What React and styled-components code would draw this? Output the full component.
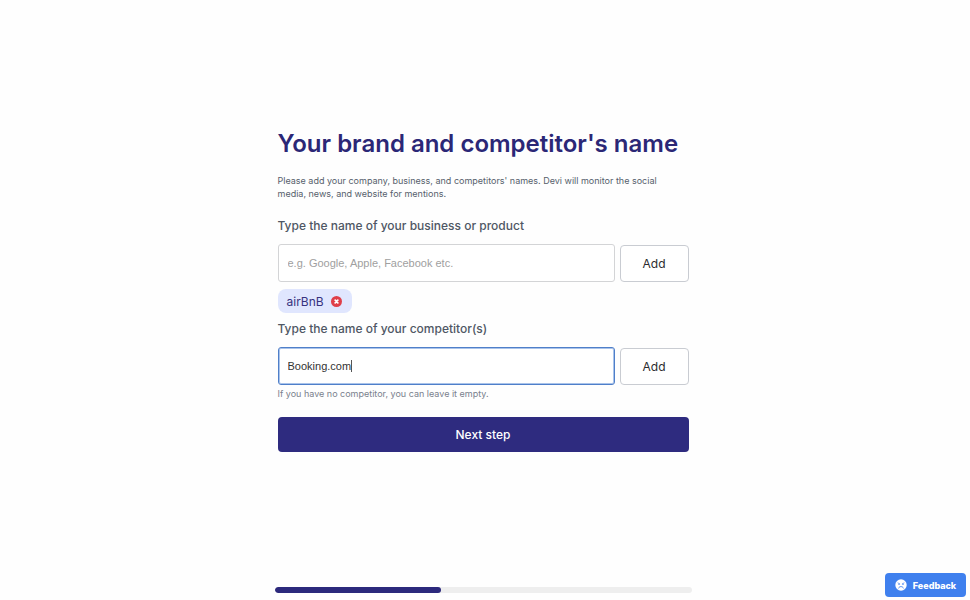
import React, { useState } from "react";
import styled, { createGlobalStyle } from "styled-components";

const GlobalStyle = createGlobalStyle`
  *, *::before, *::after { box-sizing: border-box; }
  body {
    margin: 0;
    background: #fefefe;
    font-family: Inter, "Open Sans", sans-serif;
    color: #4a5260;
  }
  button, input { font: inherit; }
`;

const Page = styled.div`
  min-height: 100vh;
  padding-right: 4px;
  display: flex;
  flex-direction: column;
  align-items: center;
`;

const Main = styled.main`
  flex: 1;
  width: 100%;
  max-width: 411px;
  display: flex;
  flex-direction: column;
  justify-content: center;
`;

const Form = styled.form`
  display: flex;
  flex-direction: column;
`;

const Title = styled.h1`
  margin: 0;
  font-size: 24px;
  line-height: 32px;
  font-weight: 600;
  color: #2b2776;
`;

const Intro = styled.p`
  margin: 14px 0 0;
  padding-right: 20px;
  font-size: 9px;
  line-height: 13px;
  color: #565e6c;
`;

const Label = styled.label`
  margin-top: ${(p) => p.$gap}px;
  font-size: 12px;
  line-height: 18px;
  font-weight: 500;
  color: #4f5764;
`;

const FieldRow = styled.div`
  margin-top: 9px;
  display: flex;
  align-items: center;
  gap: 5px;
`;

const InputWrap = styled.div`
  position: relative;
  flex: 1;
`;

const TextInput = styled.input`
  display: block;
  width: 100%;
  height: 38px;
  padding: 0 9px;
  border: 1px solid ${(p) => (p.$active ? "#4f7fc9" : "#d3d4d6")};
  border-radius: 3px;
  box-shadow: ${(p) => (p.$active ? "inset 0 0 0 1px #a9c3ea" : "none")};
  background: #fff;
  outline: none;
  font-family: "Liberation Sans", Arial, sans-serif;
  font-size: 11px;
  color: #333;
  caret-color: transparent;
  &::placeholder { color: #a0a0a0; opacity: 1; }
`;

const Caret = styled.span`
  position: absolute;
  left: 73px;
  top: 13px;
  width: 1px;
  height: 12px;
  background: #555;
`;

const AddButton = styled.button`
  width: 69px;
  height: 37px;
  padding: 0;
  border: 1px solid #c9ccd2;
  border-radius: 4px;
  background: #fff;
  font-size: 12px;
  color: #2c2c2e;
`;

const Tags = styled.div`
  margin-top: 7px;
  display: flex;
  gap: 6px;
`;

const Tag = styled.span`
  height: 24px;
  padding: 0 10px 0 9px;
  display: flex;
  align-items: center;
  gap: 7px;
  border-radius: 8px;
  background: #e0e6fe;
  font-size: 12px;
  color: #37327f;
`;

const RemoveButton = styled.button`
  width: 11px;
  height: 11px;
  padding: 0;
  border: 0;
  background: none;
  display: flex;
`;

const Hint = styled.p`
  margin: 2px 0 0;
  font-size: 9px;
  line-height: 14px;
  color: #7a818d;
`;

const NextButton = styled.button`
  margin-top: 16px;
  height: 35px;
  border: 0;
  border-radius: 4px;
  background: #2e2b7f;
  font-size: 12px;
  font-weight: 500;
  color: #fff;
`;

const Footer = styled.footer`
  width: 100%;
  max-width: 417px;
  padding: 7px 0;
`;

const Track = styled.div`
  height: 6px;
  border-radius: 3px;
  background: #eee;
  overflow: hidden;
`;

const Fill = styled.div`
  width: 40%;
  height: 100%;
  border-radius: 3px;
  background: #2c297c;
`;

const Feedback = styled.button`
  position: fixed;
  right: 4px;
  bottom: 3px;
  width: 81px;
  height: 24px;
  padding: 0;
  display: flex;
  align-items: center;
  justify-content: center;
  gap: 6px;
  border: 0;
  border-radius: 4px;
  background: #3f80ee;
  font-size: 9px;
  font-weight: 800;
  color: #fff;
`;

function RemoveIcon() {
  return (
    <svg width="11" height="11" viewBox="0 0 11 11" aria-hidden="true">
      <circle cx="5.5" cy="5.5" r="5.5" fill="#df3f49" />
      <path d="M4.2 4.2l2.6 2.6M6.8 4.2l-2.6 2.6" stroke="#fff" strokeWidth="1.8" strokeLinecap="round" />
    </svg>
  );
}

function FrownIcon() {
  return (
    <svg width="12" height="12" viewBox="0 0 12 12" aria-hidden="true">
      <circle cx="6" cy="6" r="5.7" fill="#fff" />
      <path d="M2.9 3.9l1.8.9M9.1 3.9l-1.8.9" stroke="#3f80ee" strokeWidth=".6" strokeLinecap="round" />
      <circle cx="4" cy="5.2" r=".7" fill="#3f80ee" />
      <circle cx="8" cy="5.2" r=".7" fill="#3f80ee" />
      <path d="M3.6 9c.7-2 4.1-2 4.8 0" fill="none" stroke="#3f80ee" strokeWidth=".9" strokeLinecap="round" />
    </svg>
  );
}

export default function App() {
  const [brand, setBrand] = useState("");
  const [competitor, setCompetitor] = useState("Booking.com");

  return (
    <>
      <GlobalStyle />
      <Page>
        <Main>
          <Form onSubmit={(e) => e.preventDefault()}>
            <Title>Your brand and competitor's name</Title>
            <Intro>
              Please add your company, business, and competitors' names. Devi will monitor the social
              media, news, and website for mentions.
            </Intro>
            <Label htmlFor="brand" $gap={17}>Type the name of your business or product</Label>
            <FieldRow>
              <InputWrap>
                <TextInput
                  id="brand"
                  placeholder="e.g. Google, Apple, Facebook etc."
                  value={brand}
                  onChange={(e) => setBrand(e.target.value)}
                />
              </InputWrap>
              <AddButton type="button">Add</AddButton>
            </FieldRow>
            <Tags>
              <Tag>
                airBnB
                <RemoveButton type="button" aria-label="Remove airBnB"><RemoveIcon /></RemoveButton>
              </Tag>
            </Tags>
            <Label htmlFor="competitor" $gap={7}>Type the name of your competitor(s)</Label>
            <FieldRow>
              <InputWrap>
                <TextInput
                  id="competitor"
                  $active
                  value={competitor}
                  onChange={(e) => setCompetitor(e.target.value)}
                />
                {competitor === "Booking.com" && <Caret />}
              </InputWrap>
              <AddButton type="button">Add</AddButton>
            </FieldRow>
            <Hint>If you have no competitor, you can leave it empty.</Hint>
            <NextButton type="submit">Next step</NextButton>
          </Form>
        </Main>
        <Footer>
          <Track role="progressbar" aria-label="Setup progress" aria-valuenow={40} aria-valuemin={0} aria-valuemax={100}>
            <Fill />
          </Track>
        </Footer>
      </Page>
      <Feedback type="button"><FrownIcon />Feedback</Feedback>
    </>
  );
}
